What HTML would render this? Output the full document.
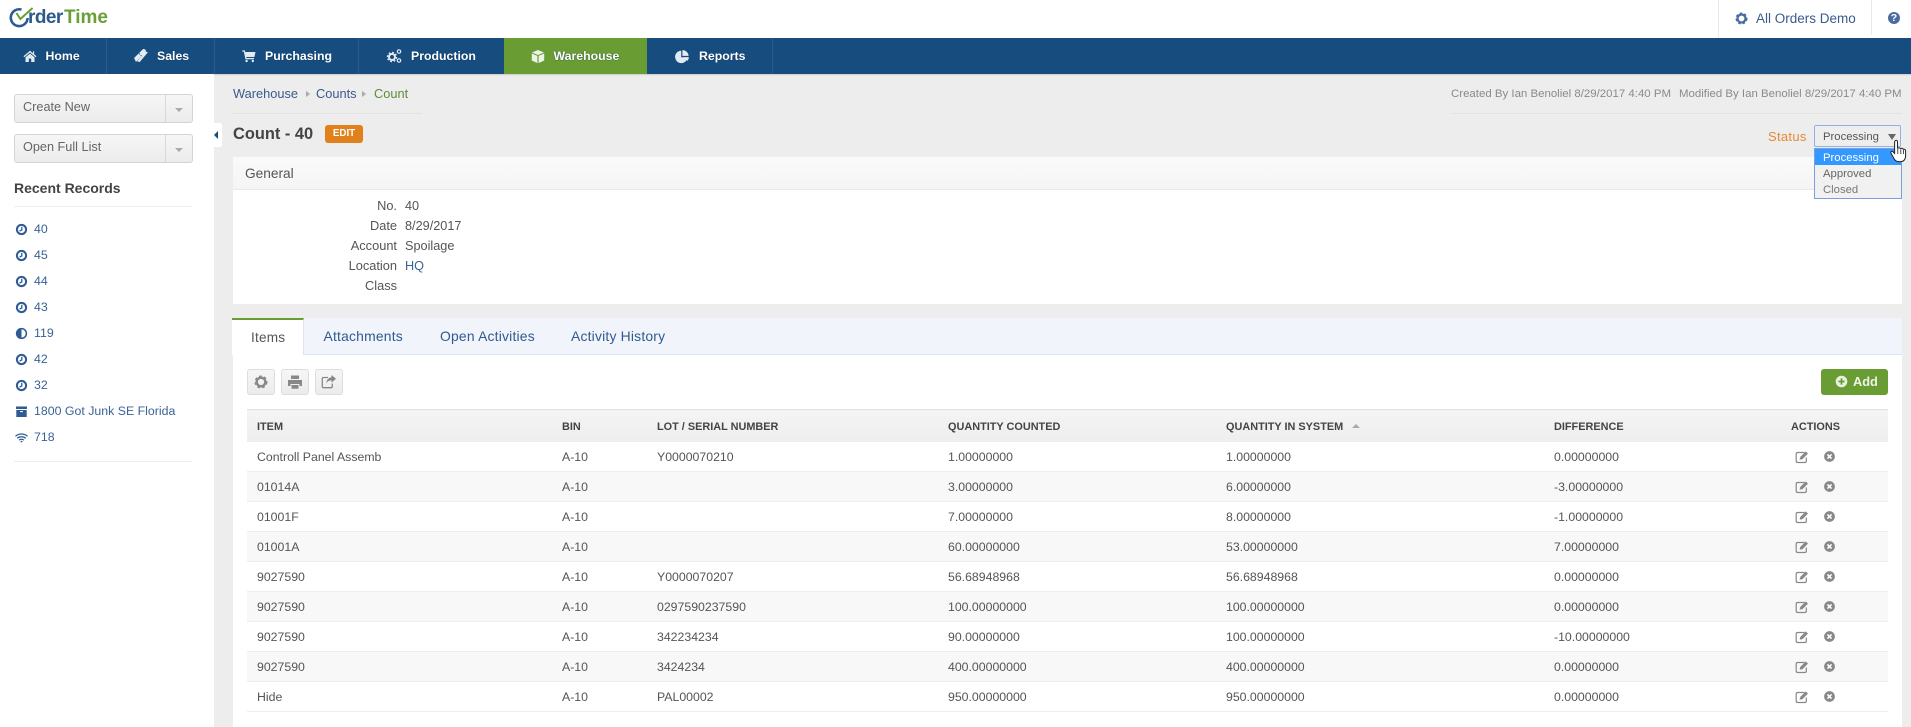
<!DOCTYPE html>
<html>
<head>
<meta charset="utf-8">
<title>Count - 40</title>
<style>
html,body{margin:0;padding:0;width:1911px;height:727px;overflow:hidden;background:#ededed;font-family:"Liberation Sans",sans-serif;font-size:12.35px;color:#555}
.a{position:absolute;white-space:nowrap}
svg{display:block;overflow:visible}
#top{left:0;top:0;width:1911px;height:38px;background:#fff}
#nav{left:0;top:38px;width:1911px;height:36px;background:#174c7f;box-shadow:0 1px 1px #ccc}
.sep{position:absolute;top:38px;width:1px;height:36px;background:#2a5d8f}
.nt{position:absolute;top:39px;line-height:35px;color:#fff;font-weight:bold;font-size:12.3px;text-shadow:0 0 1px #0b2c4f}
#side{left:0;top:74px;width:214px;height:653px;background:#fff}
.btn{position:absolute;left:14px;width:177px;height:27px;border:1px solid #d4d4d4;border-radius:3px;background:linear-gradient(#f6f6f6,#ececec);color:#666;font-size:12.7px;line-height:24px;text-indent:8px}
.btn i{position:absolute;left:150px;top:0;width:1px;height:27px;background:#d8d8d8}
.btn b{position:absolute;left:160px;top:13px;width:0;height:0;border-left:4px solid transparent;border-right:4px solid transparent;border-top:4px solid #aaa}
.rl{position:absolute;left:34px;color:#3a6296;line-height:16px;font-size:12.35px}
.ri{position:absolute;left:15px;width:13px;height:13px;color:#2f5a94}
.lb{position:absolute;width:120px;left:277px;text-align:right;font-size:12.8px;color:#555;line-height:16px}
.vl{position:absolute;left:405px;font-size:12.7px;color:#555;line-height:16px}
.tab{position:absolute;top:319px;line-height:35px;color:#2f5a8f;font-size:13.9px;letter-spacing:.2px}
.tb{position:absolute;top:369px;width:26px;height:24px;border:1px solid #ddd;border-radius:3px;background:linear-gradient(#f6f6f6,#ececec)}
.tb svg{position:absolute;left:5px;top:4px;color:#888}
#grid{position:absolute;left:247px;top:409px;width:1641px;border-collapse:collapse;table-layout:fixed}
#grid th{height:31px;padding:1px 0 0 10px;text-align:left;font-size:10.9px;color:#444;background:linear-gradient(#f4f4f4,#eeeeee);border-top:1px solid #e2e2e2;white-space:nowrap}
#grid td{height:29px;padding:0 0 0 10px;font-size:12.3px;color:#555;border-bottom:1px solid #eee;white-space:nowrap}
#grid tr:nth-child(odd) td{background:#f8f8f8}
#grid tr:nth-child(even) td{background:#fff}
#grid tr.h th{background:linear-gradient(#f4f4f4,#eeeeee)}
.act{position:absolute;color:#888}
</style>
</head>
<body>
<svg width="0" height="0" style="position:absolute">
<symbol id="clock" viewBox="0 0 13 13"><circle cx="6.5" cy="6.5" r="4.6" fill="none" stroke="currentColor" stroke-width="2"/><path d="M6.8 3.8V7L4.6 8" fill="none" stroke="currentColor" stroke-width="1.3"/></symbol>
<symbol id="half" viewBox="0 0 13 13"><circle cx="6.5" cy="6.5" r="4.9" fill="none" stroke="currentColor" stroke-width="1.5"/><path d="M6.5 1.6A4.9 4.9 0 0 0 6.5 11.4Z" fill="currentColor"/></symbol>
<symbol id="arch" viewBox="0 0 13 13"><path d="M1 1.5H12V4H1ZM1.3 5H11.7V12H1.3Z" fill="currentColor"/><path d="M5 6.6H8" stroke="#fff" stroke-width="1"/></symbol>
<symbol id="wifi" viewBox="0 0 13 13"><path d="M.5 5.2C3.8 2.3 9.2 2.3 12.5 5.2M2.3 7.2C4.6 5.3 8.4 5.3 10.7 7.2M4.1 9.1C5.5 8.1 7.5 8.1 8.9 9.1" fill="none" stroke="currentColor" stroke-width="1.3"/><path d="M6.5 11.6L5.2 10.2C6 9.7 7 9.7 7.8 10.2Z" fill="currentColor"/></symbol>
<symbol id="gear" viewBox="0 0 14 14"><circle cx="7" cy="7" r="4.3" fill="none" stroke="currentColor" stroke-width="2.4"/><circle cx="7" cy="7" r="5.6" fill="none" stroke="currentColor" stroke-width="1.8" stroke-dasharray="2.6 2.26"/></symbol>
<symbol id="home" viewBox="0 0 14 14"><path d="M7 1.8L.5 7.3l.8.9L7 3.5l5.7 4.7.8-.9-2.4-2V2.2H10v2.1ZM2.5 8.3V13h3.3V9.6h2.4V13h3.3V8.3L7 4.6Z" fill="currentColor"/></symbol>
<symbol id="tag" viewBox="0 0 16 16"><path d="M1 10.4L9.6 1.8l2 .6.6 1.2-8.4 9.6-1 .8ZM11.6 4l2.4 1-7.8 9.2-2.2-.8Z" fill="currentColor"/><path d="M5.5 6L9 9.5" stroke="#174c7f" stroke-width=".9" stroke-dasharray="1.2 1.2"/></symbol>
<symbol id="cart" viewBox="0 0 14 14"><path d="M.3 1.4H2.8L3.2 3H13.5L12.4 8H4.3L4.5 9H12V10.2H3.4L1.9 2.6H.3Z" fill="currentColor"/><circle cx="4.6" cy="12" r="1.2" fill="currentColor"/><circle cx="10.8" cy="12" r="1.2" fill="currentColor"/></symbol>
<symbol id="cube" viewBox="0 0 14 14"><path d="M7 .5L13 3 7 5.5 1 3ZM.8 4L6.4 6.4V13.6L.8 11ZM13.2 4V11L7.6 13.6V6.4Z" fill="currentColor"/></symbol>
<symbol id="pie" viewBox="0 0 14 14"><path d="M6.2 1.2A6.2 6.2 0 1 0 12.4 8.2L6.2 7.8Z" fill="currentColor"/><path d="M7.4 .6A6.2 6.2 0 0 1 13.6 6.4H7.4Z" fill="currentColor"/><path d="M8 7.6H13.8A6 6 0 0 1 12.6 11.4Z" fill="currentColor"/></symbol>
<symbol id="edit" viewBox="0 0 14 14"><path d="M9.5 2.5H2.8C1.8 2.5 1.2 3.1 1.2 4V11C1.2 11.9 1.8 12.5 2.8 12.5H9.8C10.7 12.5 11.3 11.9 11.3 11V7.5" fill="none" stroke="currentColor" stroke-width="1.2"/><path d="M4.6 9.6L5.2 7 10.8 1.4 13 3.6 7.4 9.2Z" fill="currentColor"/></symbol>
<symbol id="xc" viewBox="0 0 14 14"><circle cx="7" cy="7" r="5.8" fill="currentColor"/><path d="M4.8 4.8L9.2 9.2M9.2 4.8L4.8 9.2" stroke="#fff" stroke-width="1.7"/></symbol>
<symbol id="print" viewBox="0 0 16 16"><path d="M4 1.5H12V5H4ZM1 6H15V12H12.5V10H3.5V12H1ZM4.5 11H11.5V14.8H4.5Z" fill="currentColor"/></symbol>
<symbol id="share" viewBox="0 0 16 16"><path d="M7 3.5H2.6C1.8 3.5 1.3 4 1.3 4.8V12.4C1.3 13.2 1.8 13.7 2.6 13.7H10C10.8 13.7 11.3 13.2 11.3 12.4V9.5" fill="none" stroke="currentColor" stroke-width="1.3"/><path d="M10.5 1L15 4.8 10.5 8.6V6.4C8 6.4 6.5 7.2 5.2 9.6 5.4 6.4 7.2 3.6 10.5 3.2Z" fill="currentColor"/></symbol>
</svg>

<div class="a" id="top"></div>
<svg class="a" style="left:1px;top:0" width="40" height="34" viewBox="0 0 40 34">
<path d="M20.5 9.6A8.4 8.4 0 1 0 26.6 18" fill="none" stroke="#2c5a94" stroke-width="2.6"/>
<path d="M15.4 13L19.4 19 31.6 8" fill="none" stroke="#6a9f37" stroke-width="2"/>
</svg>
<div class="a" style="left:28px;top:6px;font-size:19px;line-height:24px;letter-spacing:-.55px;color:#2c5a8c;font-weight:bold">rder</div>
<div class="a" style="left:64px;top:6px;font-size:19px;line-height:24px;color:#6a9f37;font-weight:bold">Time</div>

<div class="a" style="left:1718px;top:0;width:1px;height:38px;background:#e8e8e8"></div>
<div class="a" style="left:1871px;top:0;width:1px;height:35px;background:#e8e8e8"></div>
<svg class="a" style="left:1735px;top:12px;color:#4a6c9e" width="13" height="13"><use href="#gear"/></svg>
<div class="a" style="left:1756px;top:10px;font-size:13.5px;line-height:17px;color:#3b5b8c">All Orders Demo</div>
<div class="a" style="left:1888px;top:12px;width:12px;height:12px;border-radius:50%;background:#4a6c9e;color:#fff;font-weight:bold;font-size:10.5px;line-height:12.5px;text-align:center">?</div>

<div class="a" id="nav"></div>
<div class="a" style="left:504px;top:38px;width:143px;height:36px;background:#699c33"></div>
<div class="sep" style="left:106px"></div>
<div class="sep" style="left:214px"></div>
<div class="sep" style="left:358px"></div>
<div class="sep" style="left:772px"></div>
<svg class="a" style="left:23px;top:49px;color:#e4eaf1" width="14" height="14"><use href="#home"/></svg>
<div class="nt" style="left:45.5px">Home</div>
<svg class="a" style="left:133px;top:47px;color:#e4eaf1" width="17" height="17"><use href="#tag"/></svg>
<div class="nt" style="left:157px">Sales</div>
<svg class="a" style="left:242px;top:49px;color:#e4eaf1" width="14" height="14"><use href="#cart"/></svg>
<div class="nt" style="left:265px">Purchasing</div>
<svg class="a" style="left:386px;top:48px;color:#e4eaf1" width="16" height="16" viewBox="0 0 16 16"><circle cx="6" cy="9" r="3" fill="none" stroke="currentColor" stroke-width="2"/><circle cx="6" cy="9" r="4.6" fill="none" stroke="currentColor" stroke-width="1.3" stroke-dasharray="1.8 1.8"/><circle cx="13" cy="3.5" r="1.7" fill="none" stroke="currentColor" stroke-width="1.2"/><circle cx="13" cy="12.5" r="1.7" fill="none" stroke="currentColor" stroke-width="1.2"/></svg>
<div class="nt" style="left:411px">Production</div>
<svg class="a" style="left:531px;top:49px;color:#eef3e8" width="14" height="15"><use href="#cube"/></svg>
<div class="nt" style="left:553.5px">Warehouse</div>
<svg class="a" style="left:675px;top:49px;color:#e4eaf1" width="14" height="15"><use href="#pie"/></svg>
<div class="nt" style="left:699px">Reports</div>

<div class="a" id="side"></div>
<div class="btn" style="top:94px">Create New<i></i><b></b></div>
<div class="btn" style="top:134px">Open Full List<i></i><b></b></div>
<div class="a" style="left:14px;top:179px;font-size:14px;font-weight:bold;color:#444;line-height:18px">Recent Records</div>
<div class="a" style="left:14px;top:206px;width:178px;height:1px;background:#eee"></div>
<svg class="ri" style="top:223px"><use href="#clock"/></svg><div class="rl" style="top:221px">40</div>
<svg class="ri" style="top:249px"><use href="#clock"/></svg><div class="rl" style="top:247px">45</div>
<svg class="ri" style="top:275px"><use href="#clock"/></svg><div class="rl" style="top:273px">44</div>
<svg class="ri" style="top:301px"><use href="#clock"/></svg><div class="rl" style="top:299px">43</div>
<svg class="ri" style="top:327px"><use href="#half"/></svg><div class="rl" style="top:325px">119</div>
<svg class="ri" style="top:353px"><use href="#clock"/></svg><div class="rl" style="top:351px">42</div>
<svg class="ri" style="top:379px"><use href="#clock"/></svg><div class="rl" style="top:377px">32</div>
<svg class="ri" style="top:405px"><use href="#arch"/></svg><div class="rl" style="top:403px">1800 Got Junk SE Florida</div>
<svg class="ri" style="top:431px"><use href="#wifi"/></svg><div class="rl" style="top:429px">718</div>
<div class="a" style="left:14px;top:461px;width:178px;height:1px;background:#eee"></div>

<div class="a" style="left:214px;top:123px;width:8px;height:24px;background:#fff;border-radius:0 2px 2px 0"></div>
<div class="a" style="left:214px;top:131px;width:0;height:0;border-top:4px solid transparent;border-bottom:4px solid transparent;border-right:4px solid #174c7f"></div>

<div class="a" style="left:233px;top:86px;font-size:12.8px;line-height:16px;color:#3a5a8c">Warehouse</div>
<div class="a" style="left:306px;top:91px;border-top:3.5px solid transparent;border-bottom:3.5px solid transparent;border-left:4px solid #aaa"></div>
<div class="a" style="left:316px;top:86px;font-size:12.8px;line-height:16px;color:#3a5a8c">Counts</div>
<div class="a" style="left:362px;top:91px;border-top:3.5px solid transparent;border-bottom:3.5px solid transparent;border-left:4px solid #aaa"></div>
<div class="a" style="left:374px;top:86px;font-size:12.8px;line-height:16px;color:#5c8c3a">Count</div>
<div class="a" style="left:233px;top:113px;width:189px;height:1px;background:#e2e2e2"></div>
<div class="a" style="left:233px;top:124px;font-size:16.4px;font-weight:bold;color:#444;line-height:20px">Count - 40</div>
<div class="a" style="left:325px;top:125px;width:38px;height:18px;border-radius:3px;background:#e0811b;color:#fff;font-weight:bold;font-size:9.8px;line-height:18px;text-align:center">EDIT</div>

<div class="a" style="left:1451px;top:86px;font-size:11.45px;line-height:16px;color:#8a8a8a">Created By Ian Benoliel 8/29/2017 4:40 PM</div>
<div class="a" style="left:1679px;top:86px;font-size:11.45px;line-height:16px;color:#8a8a8a">Modified By Ian Benoliel 8/29/2017 4:40 PM</div>
<div class="a" style="left:1451px;top:113px;width:451px;height:1px;background:#e2e2e2"></div>

<div class="a" style="left:233px;top:157px;width:1669px;height:147px;background:#fff"></div>
<div class="a" style="left:233px;top:157px;width:1669px;height:32px;background:linear-gradient(#fafafa,#f5f5f5);border-bottom:1px solid #eaeaea"></div>
<div class="a" style="left:245px;top:165px;font-size:13.7px;line-height:17px;color:#555">General</div>
<div class="lb" style="top:198px">No.</div><div class="vl" style="top:198px">40</div>
<div class="lb" style="top:218px">Date</div><div class="vl" style="top:218px">8/29/2017</div>
<div class="lb" style="top:238px">Account</div><div class="vl" style="top:238px">Spoilage</div>
<div class="lb" style="top:258px">Location</div><div class="vl" style="top:258px;color:#3a6296">HQ</div>
<div class="lb" style="top:278px">Class</div>

<div class="a" style="left:1768px;top:129px;font-size:13px;line-height:16px;color:#e58a33;letter-spacing:.3px">Status</div>
<div class="a" style="left:1814px;top:125px;width:85px;height:20px;border:1.5px solid #8fb2e6;border-radius:2px;background:#eee"></div>
<div class="a" style="left:1823px;top:130px;font-size:11.3px;line-height:15px;color:#555">Processing</div>
<div class="a" style="left:1888px;top:134px;border-left:4px solid transparent;border-right:4px solid transparent;border-top:6px solid #666"></div>
<div class="a" style="left:1814px;top:148px;width:86px;height:49px;border:1px solid #7a9fdc;background:#f1f1f1"></div>
<div class="a" style="left:1815px;top:149px;width:86px;height:16px;background:#3399ff"></div>
<div class="a" style="left:1823px;top:150px;font-size:11.3px;line-height:16px;color:#fff">Processing</div>
<div class="a" style="left:1823px;top:166px;font-size:11.3px;line-height:16px;color:#666">Approved</div>
<div class="a" style="left:1823px;top:182px;font-size:11.3px;line-height:16px;color:#777">Closed</div>
<svg class="a" style="left:1890px;top:139px" width="18" height="25" viewBox="0 0 18 25">
<path d="M5.4 1.6C6.4.9 7.5 1.5 7.5 2.6V9.2C9 8.6 10 8.8 10.6 9.6 11.8 9 12.8 9.4 13.2 10.2 14.6 9.8 15.6 10.6 15.6 12V17C15.6 20 13.8 22.6 11 22.6H8.4C6.2 22.6 5 21.4 4 19.6L1 14.2C.5 13 1.4 12 2.6 12.4L4.6 14.4V2.8C4.6 2.3 5 1.9 5.4 1.6Z" fill="#fff" stroke="#222" stroke-width="1"/>
<path d="M7.8 10V15M10.8 10.4V15M13.4 10.8V15" stroke="#222" stroke-width=".8"/>
</svg>

<div class="a" style="left:233px;top:318px;width:1669px;height:409px;background:#fff"></div>
<div class="a" style="left:233px;top:318px;width:1669px;height:36px;background:#f1f5fb;border-bottom:1px solid #dbe4ef"></div>
<div class="a" style="left:232px;top:318px;width:72px;height:37px;background:#fff;border-top:2px solid #699c33;border-right:1px solid #dbe4ef;box-sizing:border-box"></div>
<div class="tab" style="left:251px;top:320px;color:#555;font-size:13.6px">Items</div>
<div class="tab" style="left:323.5px">Attachments</div>
<div class="tab" style="left:440px">Open Activities</div>
<div class="tab" style="left:571px">Activity History</div>

<div class="tb" style="left:247px"><svg width="16" height="16" style="left:5px;top:4px"><use href="#gear" width="14" height="14" x="1" y="1"/></svg></div>
<div class="tb" style="left:281px"><svg width="16" height="16"><use href="#print"/></svg></div>
<div class="tb" style="left:315px"><svg width="16" height="16"><use href="#share"/></svg></div>

<div class="a" style="left:1821px;top:369px;width:67px;height:26px;border-radius:3px;background:#699c33"></div>
<svg class="a" style="left:1835px;top:375px" width="13" height="13" viewBox="0 0 13 13"><circle cx="6.5" cy="6.5" r="5.8" fill="#e8f0df"/><path d="M6.5 3.4V9.6M3.4 6.5H9.6" stroke="#699c33" stroke-width="1.8"/></svg>
<div class="a" style="left:1853px;top:374px;color:#eef4e6;font-weight:bold;font-size:12.8px;line-height:16px">Add</div>

<table id="grid">
<colgroup><col style="width:305px"><col style="width:95px"><col style="width:291px"><col style="width:278px"><col style="width:328px"><col style="width:236px"><col style="width:108px"></colgroup>
<tr class="h"><th>ITEM</th><th>BIN</th><th>LOT / SERIAL NUMBER</th><th>QUANTITY COUNTED</th><th>QUANTITY IN SYSTEM</th><th>DIFFERENCE</th><th><span style="margin-left:1px">ACTIONS</span></th></tr>
<tr><td>Controll Panel Assemb</td><td>A-10</td><td>Y0000070210</td><td>1.00000000</td><td>1.00000000</td><td>0.00000000</td><td></td></tr>
<tr><td>01014A</td><td>A-10</td><td></td><td>3.00000000</td><td>6.00000000</td><td>-3.00000000</td><td></td></tr>
<tr><td>01001F</td><td>A-10</td><td></td><td>7.00000000</td><td>8.00000000</td><td>-1.00000000</td><td></td></tr>
<tr><td>01001A</td><td>A-10</td><td></td><td>60.00000000</td><td>53.00000000</td><td>7.00000000</td><td></td></tr>
<tr><td>9027590</td><td>A-10</td><td>Y0000070207</td><td>56.68948968</td><td>56.68948968</td><td>0.00000000</td><td></td></tr>
<tr><td>9027590</td><td>A-10</td><td>0297590237590</td><td>100.00000000</td><td>100.00000000</td><td>0.00000000</td><td></td></tr>
<tr><td>9027590</td><td>A-10</td><td>342234234</td><td>90.00000000</td><td>100.00000000</td><td>-10.00000000</td><td></td></tr>
<tr><td>9027590</td><td>A-10</td><td>3424234</td><td>400.00000000</td><td>400.00000000</td><td>0.00000000</td><td></td></tr>
<tr><td>Hide</td><td>A-10</td><td>PAL00002</td><td>950.00000000</td><td>950.00000000</td><td>0.00000000</td><td></td></tr>
</table>
<div class="a" style="left:1352px;top:424px;border-left:4px solid transparent;border-right:4px solid transparent;border-bottom:4px solid #aaa"></div>

<svg class="act" style="left:1795px;top:450px" width="14" height="14"><use href="#edit"/></svg><svg class="act" style="left:1823px;top:450px" width="13" height="13"><use href="#xc"/></svg>
<svg class="act" style="left:1795px;top:480px" width="14" height="14"><use href="#edit"/></svg><svg class="act" style="left:1823px;top:480px" width="13" height="13"><use href="#xc"/></svg>
<svg class="act" style="left:1795px;top:510px" width="14" height="14"><use href="#edit"/></svg><svg class="act" style="left:1823px;top:510px" width="13" height="13"><use href="#xc"/></svg>
<svg class="act" style="left:1795px;top:540px" width="14" height="14"><use href="#edit"/></svg><svg class="act" style="left:1823px;top:540px" width="13" height="13"><use href="#xc"/></svg>
<svg class="act" style="left:1795px;top:570px" width="14" height="14"><use href="#edit"/></svg><svg class="act" style="left:1823px;top:570px" width="13" height="13"><use href="#xc"/></svg>
<svg class="act" style="left:1795px;top:600px" width="14" height="14"><use href="#edit"/></svg><svg class="act" style="left:1823px;top:600px" width="13" height="13"><use href="#xc"/></svg>
<svg class="act" style="left:1795px;top:630px" width="14" height="14"><use href="#edit"/></svg><svg class="act" style="left:1823px;top:630px" width="13" height="13"><use href="#xc"/></svg>
<svg class="act" style="left:1795px;top:660px" width="14" height="14"><use href="#edit"/></svg><svg class="act" style="left:1823px;top:660px" width="13" height="13"><use href="#xc"/></svg>
<svg class="act" style="left:1795px;top:690px" width="14" height="14"><use href="#edit"/></svg><svg class="act" style="left:1823px;top:690px" width="13" height="13"><use href="#xc"/></svg>
</body>
</html>
